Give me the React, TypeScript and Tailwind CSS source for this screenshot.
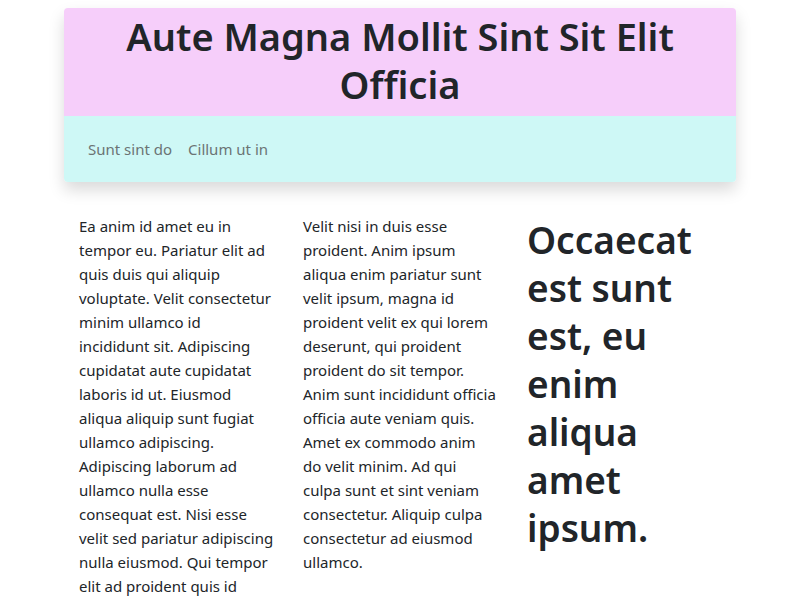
import React from "react";

const font = { fontFamily: '"Noto Sans", "Open Sans", sans-serif' };

const colOne = [
    "Ea anim id amet eu in",
    "tempor eu. Pariatur elit ad",
    "quis duis qui aliquip",
    "voluptate. Velit consectetur",
    "minim ullamco id",
    "incididunt sit. Adipiscing",
    "cupidatat aute cupidatat",
    "laboris id ut. Eiusmod",
    "aliqua aliquip sunt fugiat",
    "ullamco adipiscing.",
    "Adipiscing laborum ad",
    "ullamco nulla esse",
    "consequat est. Nisi esse",
    "velit sed pariatur adipiscing",
    "nulla eiusmod. Qui tempor",
    "elit ad proident quis id",
];

const colTwo = [
    "Velit nisi in duis esse",
    "proident. Anim ipsum",
    "aliqua enim pariatur sunt",
    "velit ipsum, magna id",
    "proident velit ex qui lorem",
    "deserunt, qui proident",
    "proident do sit tempor.",
    "Anim sunt incididunt officia",
    "officia aute veniam quis.",
    "Amet ex commodo anim",
    "do velit minim. Ad qui",
    "culpa sunt et sint veniam",
    "consectetur. Aliquip culpa",
    "consectetur ad eiusmod",
    "ullamco.",
];

function Para({ lines }: { lines: string[] }) {
    return (
        <p className="text-[15px] leading-6">
            {lines.map((l, i) => (
                <span key={i} className="block whitespace-nowrap">
                    {l}
                </span>
            ))}
        </p>
    );
}

export default function App() {
    return (
        <div className="w-full min-h-screen bg-white text-[#212529]" style={font}>
            <div className="w-[672px] mx-auto pt-2">
                <div className="rounded shadow-[0_8px_16px_rgba(0,0,0,0.15)] overflow-hidden">
                    <div className="bg-[#f6cefa] pt-[4px] pb-[8px] px-4">
                        <h1 className="text-center text-[38px] leading-[48px] font-semibold">
                            Aute Magna Mollit Sint Sit Elit Officia
                        </h1>
                    </div>
                    <nav className="bg-[#cef8f6] h-[66px] flex items-center px-4">
                        <a className="px-2 text-[15px] text-[#6b7474]">Sunt sint do</a>
                        <a className="px-2 text-[15px] text-[#6b7474]">Cillum ut in</a>
                    </nav>
                </div>

                <div className="grid grid-cols-3 mt-8">
                    <div className="px-[15px]">
                        <Para lines={colOne} />
                    </div>
                    <div className="px-[15px]">
                        <Para lines={colTwo} />
                    </div>
                    <div className="px-[15px] pt-[2px]">
                        <h1 className="text-[37px] leading-[48px] font-semibold">
                            Occaecat est sunt est, eu enim aliqua amet ipsum.
                        </h1>
                    </div>
                </div>
            </div>
        </div>
    );
}
